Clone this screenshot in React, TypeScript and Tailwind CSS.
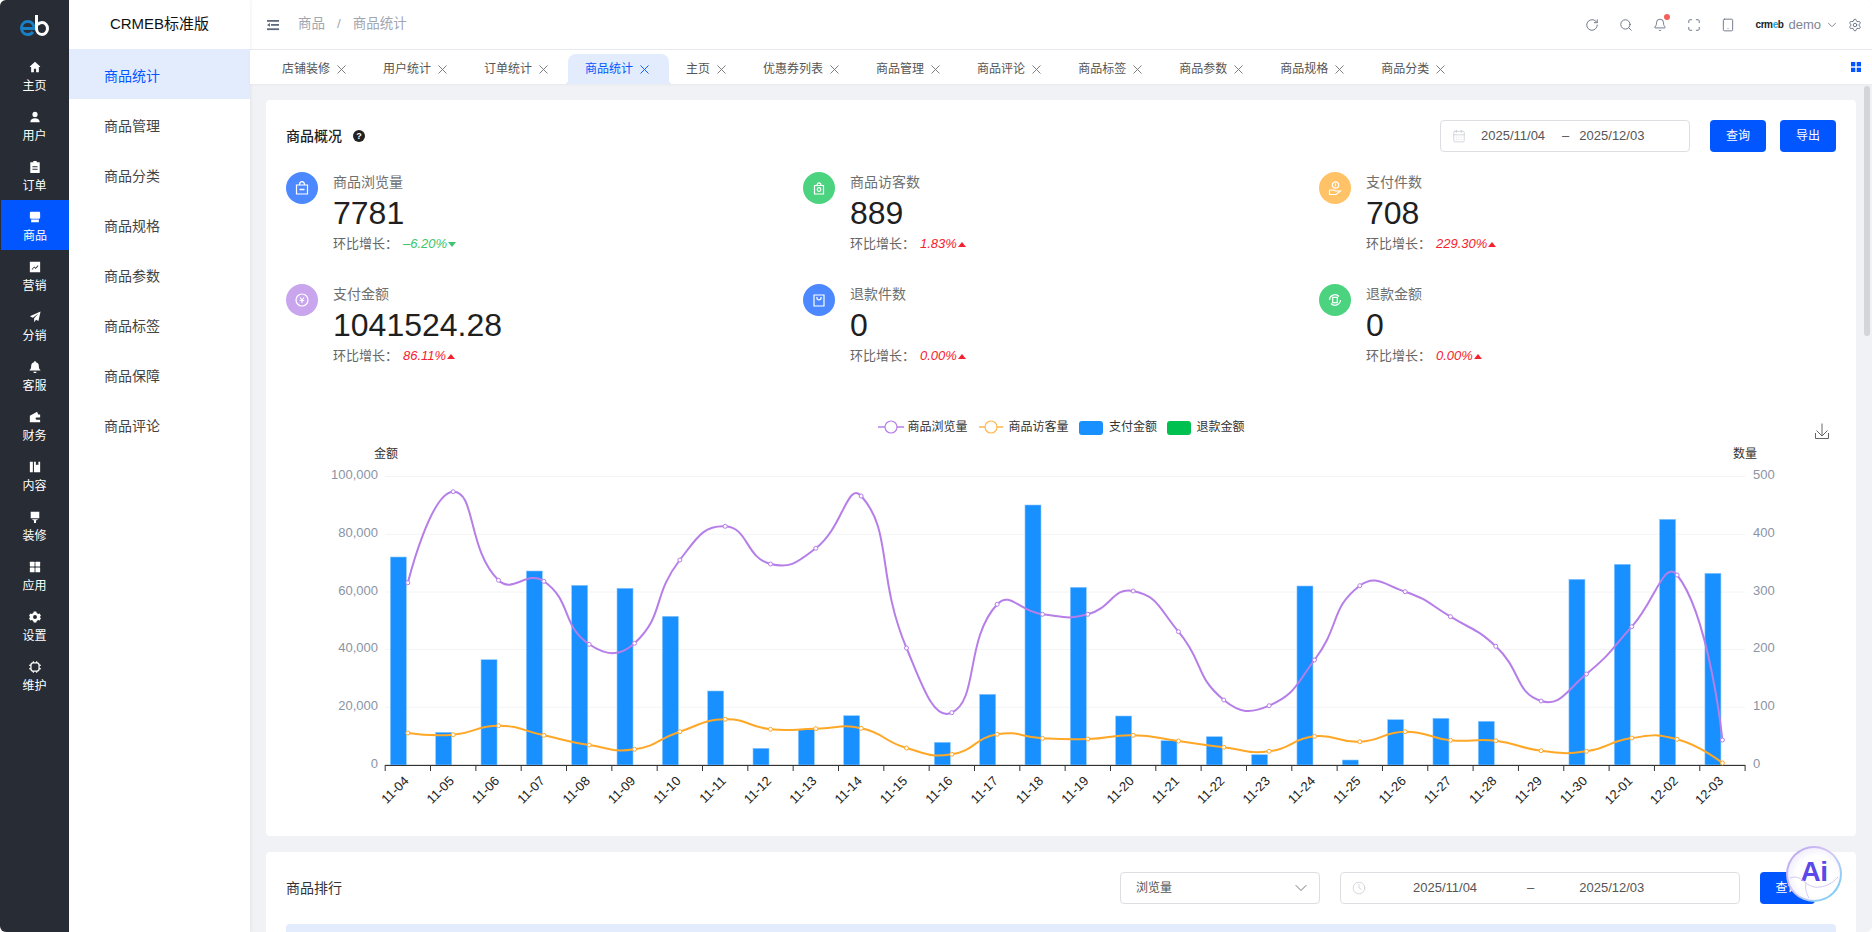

import React from "react";
import { ChevronDown, X, RotateCw, Search, Bell, Maximize, Tablet, Settings, Clock, CalendarDays } from "lucide-react";

const font = { fontFamily: '"Liberation Sans", "Noto Sans CJK SC", sans-serif' };

const ic = {
  home: <path d="M7 1 1 6.500V7h1.500v6h3.200V9h2.600v4h3.200V7H13v-.5z" />,
  user: <><circle cx="7" cy="4" r="3" /><path d="M1.500 13c0-3 2.400-4.600 5.500-4.600s5.500 1.600 5.500 4.600z" /></>,
  order: <path fillRule="evenodd" d="M5 0h4v1.500h3.500V14h-11V1.500H5zM4 6v1.200h6V6zm0 3v1.200h6V9z" />,
  goods: <path d="M2.500 1h9c1 0 1.500.6 1.500 1.500V8c0 .6-.4 1-1 1H2c-.6 0-1-.4-1-1V2.500C1 1.600 1.500 1 2.500 1zM2.500 10h9v3h-9z" />,
  market: <path fillRule="evenodd" d="M1 1h12v12H1zm2 8.500.7.7 2.500-2.500 1.500 1.500 3.300-3.400-.7-.7-2.600 2.700-1.500-1.500z" />,
  share: <path d="M13.500.5 1 6l3.500 1.800L11 3 6 8.600V13l2.200-2.800 2.800 1.500z" />,
  bell: <path d="M7 0c.6 0 1 .4 1 1v.6c2.300.4 3.500 2.300 3.500 4.400 0 2.500.8 3.800 1.800 4.500v.7H.7v-.7c1-.7 1.800-2 1.800-4.500 0-2.100 1.200-4 3.500-4.400V1c0-.6.4-1 1-1zM5 12.500h4c0 1-.9 1.500-2 1.500s-2-.5-2-1.500z" />,
  wallet: <path fillRule="evenodd" d="M1 5.500 9.500 1l1.200 3H13v9H1zM9 7.500a1.300 1.300 0 1 0 0 2.600h4V7.500z" />,
  content: <path fillRule="evenodd" d="M1 1h3.500v12H1zm4.800 0H8v4l1.500-1L11 5V1h2v12H5.800z" />,
  deco: <path d="M2 1h10v7.500H2zM3 9.500h8L8.200 11v3H5.800v-3z" />,
  app: <><rect x="1" y="1" width="5.500" height="5.500" rx=".6" /><rect x="7.500" y="1" width="5.500" height="5.500" rx=".6" /><rect x="1" y="7.500" width="5.500" height="5.500" rx=".6" /><rect x="7.500" y="7.500" width="5.500" height="5.500" rx=".6" /></>,
  set: <path fillRule="evenodd" d="M5.500.6h3l.5 1.800 1.700 1 1.800-.5 1.400 2.600-1.300 1.500 1.300 1.500-1.400 2.600-1.800-.5-1.700 1-.5 1.800h-3L5 11.600l-1.700-1-1.800.5L.1 8.500 1.400 7 .1 5.500l1.400-2.600 1.800.5 1.700-1zM7 4.700a2.300 2.300 0 1 0 0 4.600 2.300 2.300 0 0 0 0-4.600z" />,
  keep: <path fillRule="evenodd" d="M3.500 1.500h7l2 2v7l-2 2h-7l-2-2v-7zm.8 1.500L3 4.300v5.400L4.300 11h5.400L11 9.700V4.300L9.700 3zM4.500 0h1v1.500h-1zm4 0h1v1.500h-1zm-4 12.500h1V14h-1zm4 0h1V14h-1zM0 4.500h1.500v1H0zm0 4h1.500v1H0zm12.500-4H14v1h-1.500zm0 4H14v1h-1.500z" />,
};

const navItems: [string, keyof typeof ic][] = [
  ["主页", "home"], ["用户", "user"], ["订单", "order"], ["商品", "goods"], ["营销", "market"], ["分销", "share"], ["客服", "bell"],
  ["财务", "wallet"], ["内容", "content"], ["装修", "deco"], ["应用", "app"], ["设置", "set"], ["维护", "keep"],
];
const subItems = ["商品统计", "商品管理", "商品分类", "商品规格", "商品参数", "商品标签", "商品保障", "商品评论"];
const tabs = ["店铺装修", "用户统计", "订单统计", "商品统计", "主页", "优惠券列表", "商品管理", "商品评论", "商品标签", "商品参数", "商品规格", "商品分类"];

function Logo() {
  return (
    <svg width="30" height="24" viewBox="0 0 30 24">
      <path d="M2.500 14.500h11.500c.3-4.500-2.800-7-6.200-7C4 7.500 1.500 10.500 1.500 14c0 3.800 2.800 6.500 6.300 6.500 2.200 0 4-.9 5.200-2.500" fill="none" stroke="#1a7fc4" strokeWidth="3" />
      <path d="M16.500 1v13.500c0 3.500 2.500 6 5.500 6s5.500-2.600 5.500-6-2.500-6-5.500-6c-2 0-3.500.9-4.500 2.300" fill="none" stroke="#fff" strokeWidth="3" />
    </svg>
  );
}

function Sidebar() {
  return (
    <div className="w-[69px] shrink-0 bg-[#282c34] flex flex-col">
      <div className="h-[50px] flex items-center justify-center pl-[1px] pt-[2px]"><Logo /></div>
      {navItems.map(([label, icon]) => (
        <div key={label} className={`h-[50px] flex flex-col items-center pt-[11px] text-white text-[12px] leading-[16px] ${label === "商品" ? "bg-[#0256ff] ml-[1px]" : ""}`}>
          <svg width="12" height="12" viewBox="0 0 14 14" fill="#fff" className="mb-[5px]">{ic[icon]}</svg>
          <span className="h-[16px]">{label}</span>
        </div>
      ))}
    </div>
  );
}

function SubMenu() {
  return (
    <div className="w-[181px] shrink-0 bg-white flex flex-col shadow-[1px_0_3px_rgba(0,0,0,0.06)] z-10">
      <div className="h-[49px] flex items-center justify-center text-[15px] text-[#111]">CRMEB标准版</div>
      {subItems.map((s, i) => (
        <div key={s} className={`h-[50px] flex items-center pl-[35px] pt-[5px] text-[14px] ${i === 0 ? "bg-[#e3ecfd] text-[#0256ff]" : "text-[#444]"}`}>{s}</div>
      ))}
    </div>
  );
}

function Header() {
  return (
    <div className="h-[50px] shrink-0 bg-white border-b border-[#e8eaef] flex items-center pl-[17px] pr-[10px] text-[#5f6b7d]">
      <svg width="12" height="12" viewBox="0 0 12 12" fill="#5f6b7d"><rect y="1" width="12" height="1.800" /><rect x="4" y="5" width="8" height="1.800" /><path d="M0 5.900 3 4v3.800z" /><rect y="9.300" width="12" height="1.800" /></svg>
      <div className="ml-[19px] flex items-center text-[13.500px] text-[#a2a6b0]">
        <span>商品</span><span className="mx-[12px]">/</span><span>商品统计</span>
      </div>
      <div className="ml-auto flex items-center">
        <RotateCw size={14} strokeWidth={1.500} />
        <Search size={14} strokeWidth={1.500} className="ml-[20px]" />
        <div className="relative ml-[20px]">
          <Bell size={14} strokeWidth={1.500} />
          <span className="absolute -top-[4px] right-[-3px] w-[6px] h-[6px] rounded-full bg-[#f4615c]" />
        </div>
        <Maximize size={14} strokeWidth={1.500} className="ml-[20px]" />
        <Tablet size={14} strokeWidth={1.500} className="ml-[20px]" />
        <span className="ml-[20px] w-[27px] text-[10px] font-bold tracking-[-0.4px] text-[#222]">crm<span className="text-[#2a9fe0]">e</span>b</span>
        <span className="ml-[6px] text-[13px] text-[#7d8594]">demo</span>
        <ChevronDown size={14} strokeWidth={1.300} className="ml-[4px]" />
        <Settings size={14} strokeWidth={1.500} className="ml-[9px]" />
      </div>
    </div>
  );
}

function TabsBar() {
  return (
    <div className="h-[34px] shrink-0 bg-white shadow-[0_1px_3px_rgba(0,0,0,0.04)] flex items-center pl-[15px] pr-[11px] z-10">
      {tabs.map((t) => {
        const on = t === "商品统计";
        return (
          <div key={t} className={`relative px-[17px] flex items-center text-[12px] ${on ? "self-end h-[30px] bg-[#e3ecfd] text-[#0256ff] rounded-t-[8px]" : "h-[34px] pt-[4px] text-[#555]"}`}>
            {on && <span className="absolute -left-[4px] bottom-0 w-[4px] h-[4px] bg-[radial-gradient(circle_at_0_0,transparent_4px,#e3ecfd_4px)]" />}
            {t}
            <X size={15} strokeWidth={1.500} className={`ml-[4px] ${on ? "text-[#0256ff]" : "text-[#777]"}`} />
            {on && <span className="absolute -right-[4px] bottom-0 w-[4px] h-[4px] bg-[radial-gradient(circle_at_100%_0,transparent_4px,#e3ecfd_4px)]" />}
          </div>
        );
      })}
      <svg width="10" height="10" viewBox="0 0 10 10" fill="#0256ff" className="ml-auto"><rect width="4.300" height="4.300" /><rect x="5.700" width="4.300" height="4.300" /><rect y="5.700" width="4.300" height="4.300" /><rect x="5.700" y="5.700" width="4.300" height="4.300" /></svg>
    </div>
  );
}

const statIcons: Record<string, React.ReactNode> = {
  bag: <><path d="M3.500 6h11v9h-11z" /><path d="M6.500 6c0-4.500 5-4.500 5 0" /><path d="M6.500 10.500h5" strokeWidth="1.500" /></>,
  visit: <><path d="M4.500 6.500h9V15h-9z" /><path d="M7 6.500c0-3.500 4-3.500 4 0" /><circle cx="9" cy="10.500" r="1.800" /></>,
  hand: <><circle cx="9.500" cy="6" r="3.200" /><path d="M9.500 4.500v3" /><path d="M3.500 11v4.500h6.500l4.500-3.500h-4.500l-2.500-1z" /></>,
  money: <><circle cx="9" cy="9" r="6" /><path d="M7 6.500 9 9l2-2.500M6.800 9.500h4.400M9 9v3" /></>,
  ret: <><path d="M4 4h10v11H4z" /><path d="M6.800 6c0 4 4.400 4 4.400 0" /></>,
  retm: <><path d="M3.500 9a5.500 5.500 0 0 1 9.500-3.500M14.500 9a5.500 5.500 0 0 1-9.500 3.500" /><rect x="6.700" y="6.300" width="4.600" height="5.400" /></>,
};

const stats = [
  ["商品浏览量", "7781", "–6.20%", false, "#4c88ff", "bag"],
  ["商品访客数", "889", "1.83%", true, "#4bd37f", "visit"],
  ["支付件数", "708", "229.30%", true, "#ffc266", "hand"],
  ["支付金额", "1041524.28", "86.11%", true, "#c9a5ee", "money"],
  ["退款件数", "0", "0.00%", true, "#4c88ff", "ret"],
  ["退款金额", "0", "0.00%", true, "#4bd37f", "retm"],
] as const;

function Stat({ s }: { s: (typeof stats)[number] }) {
  const [name, val, pct, up, col, icon] = s;
  return (
    <div className="flex h-[112px]">
      <div className="w-[32px] h-[32px] rounded-full flex items-center justify-center shrink-0" style={{ background: col }}>
        <svg width="18" height="18" viewBox="0 0 18 18" fill="none" stroke="#fff" strokeWidth="1.200">{statIcons[icon]}</svg>
      </div>
      <div className="ml-[15px] flex flex-col">
        <div className="text-[14px] leading-[20px] text-[#6f6f6f]">{name}</div>
        <div className="text-[32px] leading-[34px] text-[#1f1f1f] mt-[4px]">{val}</div>
        <div className="flex items-center text-[13px] leading-[18px] text-[#666] mt-[5px]">
          环比增长：
          <i className={`ml-[5px] ${up ? "text-[#f5222d]" : "text-[#3dc46c]"}`}>{pct}</i>
          <span className={`ml-[1px] w-0 h-0 border-x-[4px] border-x-transparent ${up ? "border-b-[5px] border-b-[#f5222d]" : "border-t-[5px] border-t-[#3dc46c]"}`} />
        </div>
      </div>
    </div>
  );
}

const BASE = 765;
const X0 = 385.2;
const STEP = 45.33;
const labels = ["11-04","11-05","11-06","11-07","11-08","11-09","11-10","11-11","11-12","11-13","11-14","11-15","11-16","11-17","11-18","11-19","11-20","11-21","11-22","11-23","11-24","11-25","11-26","11-27","11-28","11-29","11-30","12-01","12-02","12-03"];
const barTops = [557,732.3,659.7,571,585.3,588.3,616.3,691,748.3,729.3,715.7,765,742.3,694.3,505,587.3,716,740.7,736.7,754.7,586,760,719.7,718.3,721.3,765,579.3,564.3,519.3,573.3];
const purple = [582.7,491.7,580.3,581.3,644.3,643.3,560,526.3,564,548.3,496,648,712.7,604.3,614.3,614.3,591,631.7,700,705.7,660,585.7,591.7,616.7,646.3,701,674,626.7,575,740];
const orange = [733,734.7,725.7,735.3,745,749.3,731.7,719.3,729.3,728.7,728.3,748,754.3,734.3,738.3,739,735.3,741,747.3,751.3,736.3,741.7,731.7,740.3,740.7,750.7,751.3,738,739.3,763];
const cx = (i: number) => X0 + STEP * (i + 0.5);

function smooth(ys: number[]) {
  const pts = ys.map((y, i) => [cx(i), y]);
  const S = 0.5;
  let d = `M${pts[0][0]} ${pts[0][1]}`;
  let cp0 = pts[0];
  for (let i = 0; i < pts.length - 1; i++) {
    const cur = pts[i + 1];
    const prev = pts[i];
    const next = pts[i + 2] ?? cur;
    let cp1 = cur;
    let nextCp = cur;
    if (pts[i + 2]) {
      const vx = next[0] - prev[0];
      const vy = next[1] - prev[1];
      const lp = Math.hypot(cur[0] - prev[0], cur[1] - prev[1]);
      const ln = Math.hypot(next[0] - cur[0], next[1] - cur[1]);
      const r = ln / (ln + lp);
      cp1 = [cur[0] - vx * S * (1 - r), cur[1] - vy * S * (1 - r)];
      nextCp = [cur[0] + vx * S * r, cur[1] + vy * S * r];
    }
    d += `C${cp0[0].toFixed(1)} ${cp0[1].toFixed(1)} ${cp1[0].toFixed(1)} ${cp1[1].toFixed(1)} ${cur[0].toFixed(1)} ${cur[1].toFixed(1)}`;
    cp0 = nextCp;
  }
  return d;
}

function Chart() {
  const ox = 266;
  const oy = 400;
  const grid = [476.5, 534.3, 592, 649.5, 707.3, 765];
  const left = ["100,000", "80,000", "60,000", "40,000", "20,000", "0"];
  const right = ["500", "400", "300", "200", "100", "0"];
  return (
    <svg width="1590" height="424" viewBox={`${ox} ${oy} 1590 424`} style={font} className="block">
      <g fontSize="12" fill="#333">
        <line x1="878" x2="904" y1="427" y2="427" stroke="#b67ee8" strokeWidth="1.500" />
        <circle cx="891" cy="427" r="6" fill="#fff" stroke="#b67ee8" strokeWidth="1.200" />
        <text x="907.500" y="431">商品浏览量</text>
        <line x1="979" x2="1003" y1="427" y2="427" stroke="#ffb74d" strokeWidth="1.500" />
        <circle cx="991" cy="427" r="6" fill="#fff" stroke="#ffb74d" strokeWidth="1.200" />
        <text x="1008.500" y="431">商品访客量</text>
        <rect x="1079" y="421" width="24" height="14" rx="3" fill="#1890ff" />
        <text x="1109" y="431">支付金额</text>
        <rect x="1167" y="421" width="24" height="14" rx="3" fill="#00c050" />
        <text x="1196.500" y="431">退款金额</text>
      </g>
      <path d="M1822 423.500v12M1816.500 430.500l5.500 5.500 5.500-5.500M1815.500 433v5.500h13V433" fill="none" stroke="#666" strokeWidth="1" />
      <text x="374" y="458" fontSize="12" fill="#333">金额</text>
      <text x="1733" y="458" fontSize="12" fill="#333">数量</text>
      {grid.map((y, i) => (
        <g key={y}>
          <line x1={X0} x2={X0 + STEP * 30} y1={y} y2={y} stroke={i === 5 ? "#bbb" : "#f3f4f6"} />
          <text x={378} y={y + 2.500} fontSize="13" fill="#8a94a6" textAnchor="end">{left[i]}</text>
          <text x={1753} y={y + 2.500} fontSize="13" fill="#8a94a6">{right[i]}</text>
        </g>
      ))}
      {barTops.map((t, i) => t < BASE && (
        <rect key={i} x={cx(i) - 17.500} y={t} width={16} height={BASE - t} fill="#1890ff" stroke="#8cc8ff" strokeWidth="0.600" />
      ))}
      <line x1={X0} x2={X0 + STEP * 30} y1={765.500} y2={765.500} stroke="#333" />
      {Array.from({ length: 31 }).map((_, i) => (
        <line key={i} x1={X0 + STEP * i} x2={X0 + STEP * i} y1={765} y2={771} stroke="#333" />
      ))}
      {labels.map((l, i) => (
        <text key={l} fontSize="13" fill="#222" textAnchor="end" transform={`translate(${cx(i) - 4},${776}) rotate(-45)`} dy="8">{l}</text>
      ))}
      <path d={smooth(purple)} fill="none" stroke="#b67ee8" strokeWidth="2" />
      <path d={smooth(orange)} fill="none" stroke="#ffa726" strokeWidth="2" />
      {purple.map((y, i) => <circle key={i} cx={cx(i)} cy={y} r="2" fill="#fff" stroke="#b67ee8" strokeWidth="1" />)}
      {orange.map((y, i) => <circle key={i} cx={cx(i)} cy={y} r="2" fill="#fff" stroke="#ffa726" strokeWidth="1" />)}
    </svg>
  );
}

function Btn({ children, className = "" }: { children: React.ReactNode; className?: string }) {
  return <div className={`h-[32px] shrink-0 bg-[#0256ff] text-white text-[12px] rounded-[4px] flex items-center justify-center ${className}`}>{children}</div>;
}

function AiBadge() {
  return (
    <div className="absolute left-[1786px] top-[846px] w-[56px] h-[56px] rounded-full z-20 p-[2px] bg-[linear-gradient(135deg,#b49cf0_0%,#d8c8f5_45%,#5fd0f5_100%)]">
      <div className="relative w-full h-full rounded-full overflow-hidden flex items-center justify-center bg-[radial-gradient(circle_at_55%_55%,#ffffff_50%,#e2dcfa_100%)]">
        <span className="text-[28px] font-bold leading-none text-[#5b48e8] tracking-[-0.5px] -mt-[4px]">Ai</span>
        <svg width="52" height="52" viewBox="0 0 52 52" fill="none" stroke="#cfc8ee" strokeWidth="1" className="absolute inset-0">
          <path d="M2 30c8-3 12 2 16 5s8 5 14 4 12-3 18-10" />
          <path d="M18 35c-1 5 0 10 3 15" />
        </svg>
      </div>
    </div>
  );
}

export default function App() {
  return (
    <div className="relative w-[1872px] h-[932px] overflow-hidden flex bg-[#f0f2f5] rounded-[6px]" style={font}>
      <Sidebar />
      <SubMenu />
      <div className="flex-1 min-w-0 flex flex-col">
        <Header />
        <TabsBar />
        <div className="flex-1 min-h-0 flex">
          <div className="flex-1 min-w-0 overflow-hidden pt-[16px] pl-[16px] pr-[4px] flex flex-col gap-[16px]">
            <div className="h-[736px] shrink-0 bg-white rounded-[4px]">
              <div className="px-[20px] pt-[20px] h-[300px]">
                <div className="h-[32px] flex items-center">
                  <span className="text-[14px] font-medium text-[#222]">商品概况</span>
                  <span className="ml-[11px] w-[12px] h-[12px] rounded-full bg-[#222] text-white text-[9px] font-bold leading-[12px] text-center">?</span>
                  <div className="ml-auto w-[250px] h-[32px] border border-[#dcdee2] rounded-[4px] flex items-center text-[13px] text-[#555]">
                    <CalendarDays size={14} strokeWidth={1} className="ml-[11px] text-[#b9bdc6]" />
                    <span className="ml-[15px]">2025/11/04</span>
                    <span className="ml-[17px]">–</span>
                    <span className="ml-[10px]">2025/12/03</span>
                  </div>
                  <Btn className="w-[56px] ml-[20px]">查询</Btn>
                  <Btn className="w-[56px] ml-[14px]">导出</Btn>
                </div>
                <div className="grid grid-cols-[517px_516px_1fr] mt-[20px]">
                  {stats.map((s) => <Stat key={s[0]} s={s} />)}
                </div>
              </div>
              <Chart />
            </div>
            <div className="flex-1 bg-white rounded-t-[4px] px-[20px] pt-[20px] flex flex-col">
              <div className="h-[32px] flex items-center pr-[21px]">
                <span className="text-[14px] text-[#333] shrink-0">商品排行</span>
                <div className="ml-auto w-[200px] shrink-0 h-[32px] border border-[#dcdee2] rounded-[4px] flex items-center pl-[15px] pr-[8px] text-[12px] text-[#555]">
                  浏览量
                  <ChevronDown size={20} strokeWidth={1.200} className="ml-auto text-[#777]" />
                </div>
                <div className="ml-[20px] w-[400px] shrink-0 h-[32px] border border-[#dcdee2] rounded-[4px] flex items-center text-[13px] text-[#555]">
                  <Clock size={14} strokeWidth={1} className="ml-[11px] text-[#b9bdc6]" />
                  <span className="ml-[47px] w-[65px]">2025/11/04</span>
                  <span className="ml-[49px]">–</span>
                  <span className="ml-[45px]">2025/12/03</span>
                </div>
                <Btn className="w-[55px] ml-[20px]">查询</Btn>
              </div>
              <div className="mt-[20px] h-[40px] bg-[#e3ecfd] rounded-t-[4px]" />
            </div>
          </div>
          <div className="w-[12px] shrink-0 pt-[2px] pl-[4px]">
            <div className="w-[6px] h-[250px] rounded-[3px] bg-[#d3d5d9]" />
          </div>
        </div>
      </div>
      <AiBadge />
    </div>
  );
}
